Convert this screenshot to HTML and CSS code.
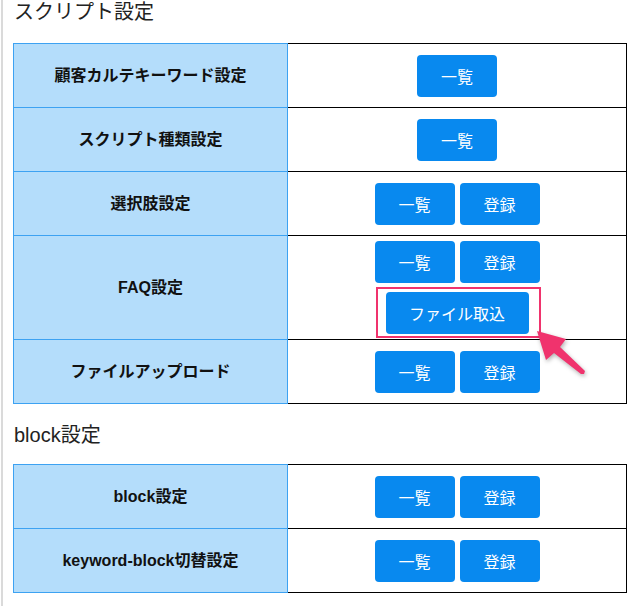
FILE: index.html
```html
<!DOCTYPE html>
<html lang="ja">
<head>
    <meta charset="UTF-8">
    <meta name="viewport" content="width=device-width, initial-scale=1.0">
    <title>スクリプト設定</title>
    <link rel="stylesheet" href="styles.css">
</head>
<body>
    <div class="page">
        <div class="section-title first">スクリプト設定</div>
        <table class="settings">
            <tr>
                <th>顧客カルテキーワード設定</th>
                <td><div class="btn-row"><button class="btn">一覧</button></div></td>
            </tr>
            <tr>
                <th>スクリプト種類設定</th>
                <td><div class="btn-row"><button class="btn">一覧</button></div></td>
            </tr>
            <tr>
                <th>選択肢設定</th>
                <td><div class="btn-row"><button class="btn">一覧</button><button class="btn">登録</button></div></td>
            </tr>
            <tr>
                <th>FAQ設定</th>
                <td>
                    <div class="btn-rows">
                        <div class="btn-row"><button class="btn">一覧</button><button class="btn">登録</button></div>
                        <div class="btn-row">
                            <span class="highlight">
                                <button class="btn btn-wide">ファイル取込</button>
                                <svg class="arrow" width="56" height="54" viewBox="0 0 56 54">
                                    <polygon points="3,5 32,13 26,21 51,45 50,48 47,48 20,27 12,34" fill="#f0336d"/>
                                </svg>
                            </span>
                        </div>
                    </div>
                </td>
            </tr>
            <tr>
                <th>ファイルアップロード</th>
                <td><div class="btn-row"><button class="btn">一覧</button><button class="btn">登録</button></div></td>
            </tr>
        </table>

        <div class="section-title second">block設定</div>
        <table class="settings">
            <tr>
                <th>block設定</th>
                <td><div class="btn-row"><button class="btn">一覧</button><button class="btn">登録</button></div></td>
            </tr>
            <tr>
                <th>keyword-block切替設定</th>
                <td><div class="btn-row"><button class="btn">一覧</button><button class="btn">登録</button></div></td>
            </tr>
        </table>
    </div>
</body>
</html>
```

FILE: styles.css
```css
body {
    margin: 0;
    font-family: "Liberation Sans", "Noto Sans CJK JP", sans-serif;
    color: #111;
    background-color: #fff;
}
.page {
    margin-left: 1px;
    width: 633px;
    min-height: 606px;
    padding-left: 10px;
    box-sizing: content-box;
    border-left: 2px solid #dadada;
    border-right: 1px solid #cfcfcf;
    overflow: hidden;
}
.section-title {
    font-size: 20px;
    line-height: 24px;
    color: #222;
    padding-left: 1px;
}
.section-title.first {
    margin-bottom: 19px;
}
.section-title.second {
    margin-top: 19px;
    margin-bottom: 17px;
}
.settings {
    border-collapse: collapse;
    width: 614px;
}
.settings th {
    width: 263px;
    height: 53px;
    padding: 5px;
    background-color: #b4ddfb;
    border: 1px solid #3da2f2;
    font-size: 16px;
    font-weight: bold;
    line-height: 22px;
    text-align: center;
}
.settings td {
    padding: 5px;
    border: 1px solid #000;
    border-left: none;
    vertical-align: middle;
}
.btn-rows {
    display: flex;
    flex-direction: column;
    gap: 9px;
}
.btn-row {
    display: flex;
    justify-content: center;
    gap: 5px;
}
.btn {
    width: 80px;
    height: 42px;
    padding: 0;
    border: none;
    border-radius: 4px;
    background-color: #0889ef;
    color: #fff;
    font-family: "Noto Sans CJK JP", sans-serif;
    font-size: 16px;
    line-height: 42px;
    cursor: pointer;
}
.btn-wide {
    width: 143px;
}
.highlight {
    position: relative;
    display: inline-block;
    height: 42px;
}
.highlight::after {
    content: "";
    position: absolute;
    top: -5px;
    right: -12px;
    bottom: -4px;
    left: -10px;
    border: 2px solid #f0336d;
    pointer-events: none;
}
.arrow {
    position: absolute;
    left: 148px;
    top: 34px;
    z-index: 2;
    filter: drop-shadow(1px 2px 2px rgba(0, 0, 0, 0.3));
}
```
